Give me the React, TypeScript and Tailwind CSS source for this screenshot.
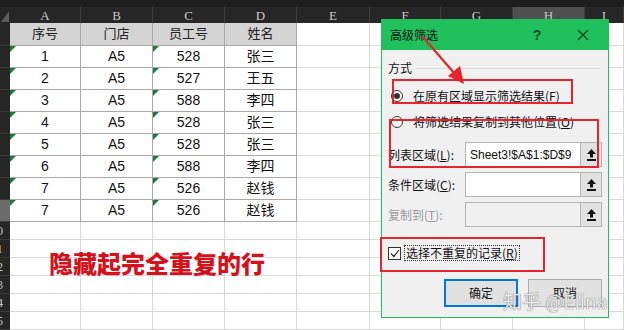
import clsx from "clsx";

// column widths of the sheet (px)
const cols = [
  { key: "A", w: "w-[71px]" },
  { key: "B", w: "w-[72px]" },
  { key: "C", w: "w-[72px]" },
  { key: "D", w: "w-[72px]" },
  { key: "E", w: "w-[73px]" },
  { key: "F", w: "w-[71px]" },
  { key: "G", w: "w-[72px]" },
  { key: "H", w: "w-[72px]" },
  { key: "I", w: "flex-1" },
];

const header = ["序号", "门店", "员工号", "姓名"];
const data = [
  ["1", "A5", "528", "张三"],
  ["2", "A5", "527", "王五"],
  ["3", "A5", "588", "李四"],
  ["4", "A5", "528", "张三"],
  ["5", "A5", "528", "张三"],
  ["6", "A5", "588", "李四"],
  ["7", "A5", "526", "赵钱"],
  ["7", "A5", "526", "赵钱"],
];

function RowHead({ n, active }: { n: number; active?: boolean }) {
  return (
    <div
      className={clsx(
        "w-[10px] shrink-0 overflow-hidden border-b border-[#3a3a3a]",
        active ? "bg-[#6b6b6b]" : "bg-[#262626]"
      )}
    >
      <div className="ml-[-16px] w-[26px] h-full flex items-center justify-center text-[12px] text-[#c4c4c4] font-['Liberation_Serif',serif]">
        {n}
      </div>
    </div>
  );
}

function ColHeader() {
  return (
    <div className="flex h-[16px] bg-[#262626]">
      <div className="w-[10px] shrink-0 relative">
        <div className="absolute right-[1px] bottom-[1px] w-0 h-0 border-b-[11px] border-l-[8px] border-b-[#5c5c5c] border-l-transparent" />
      </div>
      {cols.map((c) => (
        <div
          key={c.key}
          className={clsx(
            c.w,
            "shrink-0 border-r border-[#3c3c3c] flex items-center justify-center text-[13px] leading-none text-[#c8c8c8] font-['Liberation_Serif',serif]",
            c.key === "H" && "bg-[#4f4f4f]"
          )}
        >
          {c.key}
        </div>
      ))}
    </div>
  );
}

function TextMark() {
  return (
    <div className="absolute left-0 top-0 w-0 h-0 border-t-[6px] border-r-[6px] border-t-[#1d7a3a] border-r-transparent" />
  );
}

function DataRow({ cells, n, head, active }: { cells: string[]; n: number; head?: boolean; active?: boolean }) {
  return (
    <div className={clsx("flex", head ? "h-[23px]" : "h-[22px]")}>
      <RowHead n={n} active={active} />
      {cols.map((c, i) => {
        const inTable = i < 4;
        return (
          <div
            key={c.key}
            className={clsx(
              c.w,
              "shrink-0 relative border-r border-b flex items-center justify-center",
              inTable ? "border-[#a9a9a9]" : "border-[#d9d9d9]",
              inTable && head && "bg-[#d4d4d4]",
              head ? "text-[13px] text-[#222]" : "text-[14px] text-[#111]",
              i === 3 && !head && "text-[13.5px]"
            )}
          >
            {!head && (i === 0 || i === 2) && <TextMark />}
            {inTable ? cells[i] : ""}
          </div>
        );
      })}
    </div>
  );
}

function EmptyRow({ n }: { n: number }) {
  return (
    <div className="flex h-[18px]">
      <RowHead n={n} />
      {cols.map((c) => (
        <div key={c.key} className={clsx(c.w, "shrink-0 border-r border-b border-[#d9d9d9]")} />
      ))}
    </div>
  );
}

function Radio({ checked }: { checked?: boolean }) {
  return (
    <div className="w-[12px] h-[12px] rounded-full border border-[#333] bg-white flex items-center justify-center">
      {checked && <div className="w-[6px] h-[6px] rounded-full bg-[#333]" />}
    </div>
  );
}

function PickIcon() {
  return (
    <svg width="9" height="12" viewBox="0 0 9 12">
      <polygon points="4.5,0 9,5 6,5 6,8.5 3,8.5 3,5 0,5" fill="#111" />
      <rect x="0" y="10" width="9" height="2" fill="#111" />
    </svg>
  );
}

function RangeField({ label, keyChar, value, disabled }: { label: string; keyChar: string; value?: string; disabled?: boolean }) {
  return (
    <div className="flex items-center h-[25px] pl-[6px] pr-[6px]">
      <div className={clsx("flex-1 text-[12px] leading-none", disabled ? "text-[#9a9a9a]" : "text-[#111]")}>
        {label}(<span className="underline">{keyChar}</span>):
      </div>
      <div
        className={clsx(
          "w-[116px] h-full border border-[#b4b4b4] flex items-center pl-[4px] text-[12px] text-[#111] font-['Liberation_Sans',sans-serif]",
          disabled ? "bg-[#f0f0f0]" : "bg-white"
        )}
      >
        {value}
      </div>
      <div className="w-[21px] h-full border border-l-0 border-[#b4b4b4] bg-[#e1e1e1] flex items-center justify-center">
        <PickIcon />
      </div>
    </div>
  );
}

function Dialog() {
  return (
    <div className="absolute left-[381px] top-[19px] w-[228px] h-[299px] border border-[#1fbf5b] bg-[#f0f0f0] flex flex-col font-['Noto_Sans_CJK_SC',sans-serif]">
      {/* title bar */}
      <div className="h-[30px] shrink-0 bg-[#20c05c] flex items-center pl-[8px] text-[12px] leading-none text-[#111]">
        <span className="flex-1">高级筛选</span>
        <span className="w-[10px] text-center text-[14px] font-bold text-[#1c4a2a] mr-[35px] font-['Liberation_Sans',sans-serif]">?</span>
        <svg width="12" height="12" viewBox="0 0 12 12" className="mr-[19px]">
          <path d="M1 1 L11 11 M11 1 L1 11" stroke="#1c3a26" strokeWidth="1.3" />
        </svg>
      </div>

      {/* mode group */}
      <div className="mt-[11px] h-[14px] flex items-center pl-[6px] pr-[8px] gap-[4px] text-[12px] leading-none text-[#111]">
        <span>方式</span>
        <div className="flex-1 h-px bg-[#dcdcdc]" />
      </div>
      <div className="mt-[13px] h-[16px] flex items-center pl-[9px] gap-[10px] text-[12px] leading-none text-[#111]">
        <Radio checked />
        <span>
          在原有区域显示筛选结果(<span className="underline">F</span>)
        </span>
      </div>
      <div className="mt-[10px] h-[16px] flex items-center pl-[9px] gap-[10px] text-[12px] leading-none text-[#111]">
        <Radio />
        <span>
          将筛选结果复制到其他位置(<span className="underline">O</span>)
        </span>
      </div>

      {/* ranges */}
      <div className="mt-[12px] flex flex-col gap-[5px]">
        <RangeField label="列表区域" keyChar="L" value="Sheet3!$A$1:$D$9" />
        <RangeField label="条件区域" keyChar="C" />
        <RangeField label="复制到" keyChar="T" disabled />
      </div>

      {/* unique records */}
      <div className="mt-[18px] h-[16px] flex items-center pl-[6px] gap-[3px] text-[12px] leading-none text-[#111]">
        <div className="w-[13px] h-[13px] border border-[#333] bg-white flex items-center justify-center">
          <svg width="10" height="9" viewBox="0 0 10 9">
            <path d="M1 4.5 L3.8 7.5 L9 1" fill="none" stroke="#222" strokeWidth="1.2" />
          </svg>
        </div>
        <span className="border border-dotted border-[#333] px-[1px] py-[1px]">
          选择不重复的记录(<span className="underline">R</span>)
        </span>
      </div>

      {/* buttons */}
      <div className="mt-[18px] flex justify-end gap-[10px] pr-[6px] text-[12px] leading-none text-[#111]">
        <div className="w-[74px] h-[28px] border-2 border-[#0078d7] bg-[#e1e1e1] flex items-center justify-center">确定</div>
        <div className="w-[74px] h-[28px] border border-[#adadad] bg-[#e1e1e1] flex items-center justify-center">取消</div>
      </div>
    </div>
  );
}

export default function App() {
  return (
    <div className="relative w-[624px] h-[330px] overflow-hidden bg-white font-['Liberation_Sans','Noto_Sans_CJK_SC',sans-serif]">
      <div className="h-[7px] bg-[#1e1e1e]" />
      <ColHeader />
      <DataRow cells={header} n={1} head />
      {data.map((r, i) => (
        <DataRow key={i} cells={r} n={i + 2} active={i === data.length - 1} />
      ))}
      {[10, 11, 12, 13, 14, 15].map((n) => (
        <EmptyRow key={n} n={n} />
      ))}

      {/* note typed over the cells */}
      <div className="absolute left-[49px] top-[249px] text-[24px] leading-[28px] font-black text-[#d3121c] font-['Noto_Sans_CJK_SC',sans-serif] whitespace-nowrap">
        隐藏起完全重复的行
      </div>

      <Dialog />

      {/* red annotation boxes */}
      <div className="absolute left-[392px] top-[79px] w-[181px] h-[25px] border-2 border-[#e3262d]" />
      <div className="absolute left-[389px] top-[119px] w-[210px] h-[49px] border-2 border-[#e3262d]" />
      <div className="absolute left-[380px] top-[237px] w-[165px] h-[35px] border-2 border-[#e3262d]" />

      {/* red arrow */}
      <svg className="absolute inset-0 pointer-events-none" width="624" height="330" viewBox="0 0 624 330">
        <line x1="422" y1="36" x2="455" y2="74" stroke="#e3262d" strokeWidth="2.2" />
        <polygon points="464,84 448,76 460,66" fill="#e3262d" />
      </svg>

      {/* watermark */}
      <div className="absolute left-[503px] top-[289px] text-[19px] leading-[24px] text-white/85 font-['Noto_Sans_CJK_SC',sans-serif] [text-shadow:0_0_1px_#777,0_0_1px_#777] whitespace-nowrap">
        知乎 @Elina
      </div>
    </div>
  );
}
